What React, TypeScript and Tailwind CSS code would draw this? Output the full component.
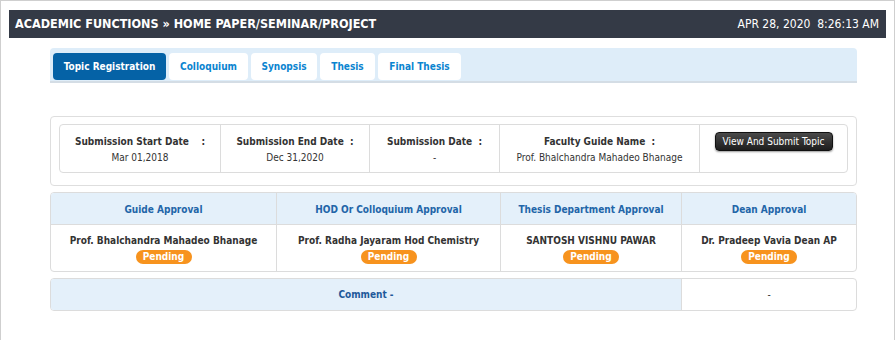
const tabs = [
  { label: "Topic Registration", w: "w-[113px]", active: true },
  { label: "Colloquium", w: "w-[79px]" },
  { label: "Synopsis", w: "w-[66px]" },
  { label: "Thesis", w: "w-[55px]" },
  { label: "Final Thesis", w: "w-[83px]" },
];

const approvals = [
  { title: "Guide Approval", name: "Prof. Bhalchandra Mahadeo Bhanage", w: "w-[226px]" },
  { title: "HOD Or Colloquium Approval", name: "Prof. Radha Jayaram Hod Chemistry", w: "w-[224px]" },
  { title: "Thesis Department Approval", name: "SANTOSH VISHNU PAWAR", w: "w-[181px]" },
  { title: "Dean Approval", name: "Dr. Pradeep Vavia Dean AP", w: "flex-1" },
];

function InfoCell({ label, value, w }: { label: string; value: string; w: string }) {
  return (
    <div className={`${w} flex flex-col items-center justify-center border-r border-[#dcdcdc] pt-[2px]`}>
      <div className="text-[10px] font-bold leading-[13px] text-[#333] whitespace-pre">{label}</div>
      <div className="mt-[3px] text-[10px] leading-[13px] text-[#333]">{value}</div>
    </div>
  );
}

export default function App() {
  return (
    <div className="w-[895px] h-[340px] overflow-hidden bg-white font-['DejaVu_Sans_Condensed','DejaVu_Sans',sans-serif]">
      <div className="h-[360px] border border-[#cfcfcf] pt-[9px]">
        <div className="mx-[8px] h-[28px] bg-[#343a46] flex items-center justify-between pl-[6px] pr-[7px] text-white">
          <span className="text-[12.5px] font-bold">ACADEMIC FUNCTIONS » HOME PAPER/SEMINAR/PROJECT</span>
          <span className="text-[12px] whitespace-pre">APR 28, 2020  8:26:13 AM</span>
        </div>

        <div className="ml-[49px] mt-[10px] w-[807px] h-[35px] bg-[#deedf9] rounded-t-[4px] border-b-2 border-[#d4dde5] flex items-end gap-[3px] pl-[3px] pb-[1px]">
          {tabs.map((t) => (
            <div
              key={t.label}
              className={`${t.w} h-[27px] rounded-[4px] flex items-center justify-center text-[10px] font-bold ${
                t.active ? "bg-[#0562a6] text-white" : "bg-white text-[#0a84d0]"
              }`}
            >
              {t.label}
            </div>
          ))}
        </div>

        <div className="ml-[49px] mt-[33px] w-[807px] h-[70px] border border-[#dedede] rounded-[4px] pt-[7px] px-[8px]">
          <div className="h-[49px] border border-[#dcdcdc] rounded-[4px] flex">
            <InfoCell w="w-[161px]" label="Submission Start Date    :" value="Mar 01,2018" />
            <InfoCell w="w-[149px]" label="Submission End Date  :" value="Dec 31,2020" />
            <InfoCell w="w-[130px]" label="Submission Date  :" value="-" />
            <InfoCell w="w-[200px]" label="Faculty Guide Name  :" value="Prof. Bhalchandra Mahadeo Bhanage" />
            <div className="flex-1 flex justify-center pt-[7px]">
              <button className="h-[19px] w-[118px] rounded-[4px] bg-gradient-to-b from-[#4a4a4a] to-[#1e1e1e] border border-[#111] text-white text-[10px] leading-none shadow-[0_1px_2px_rgba(0,0,0,0.4)]">
                View And Submit Topic
              </button>
            </div>
          </div>
        </div>

        <div className="ml-[49px] mt-[6px] w-[807px] h-[80px] border border-[#dcdcdc] rounded-[4px] flex overflow-hidden">
          {approvals.map((a, i) => (
            <div key={a.title} className={`${a.w} flex flex-col ${i < 3 ? "border-r border-[#dcdcdc]" : ""}`}>
              <div className="h-[32px] bg-[#e4f0fa] border-b border-[#dcdcdc] flex items-center justify-center text-[10px] font-bold text-[#2265a8] pt-[1px]">
                {a.title}
              </div>
              <div className="flex-1 flex flex-col items-center pt-[9px]">
                <div className="text-[10px] font-bold leading-[14px] text-[#333]">{a.name}</div>
                <div className="mt-[2px] h-[14px] w-[56px] rounded-full bg-[#f7931e] text-white text-[10px] font-bold leading-[14px] text-center">
                  Pending
                </div>
              </div>
            </div>
          ))}
        </div>

        <div className="ml-[49px] mt-[6px] w-[807px] h-[33px] border border-[#dcdcdc] rounded-[4px] flex overflow-hidden">
          <div className="w-[631px] bg-[#e4f0fa] border-r border-[#dcdcdc] flex items-center justify-center text-[10px] font-bold text-[#1f5a9a]">
            Comment -
          </div>
          <div className="flex-1 flex items-center justify-center text-[10px] text-[#333]">-</div>
        </div>
      </div>
    </div>
  );
}
